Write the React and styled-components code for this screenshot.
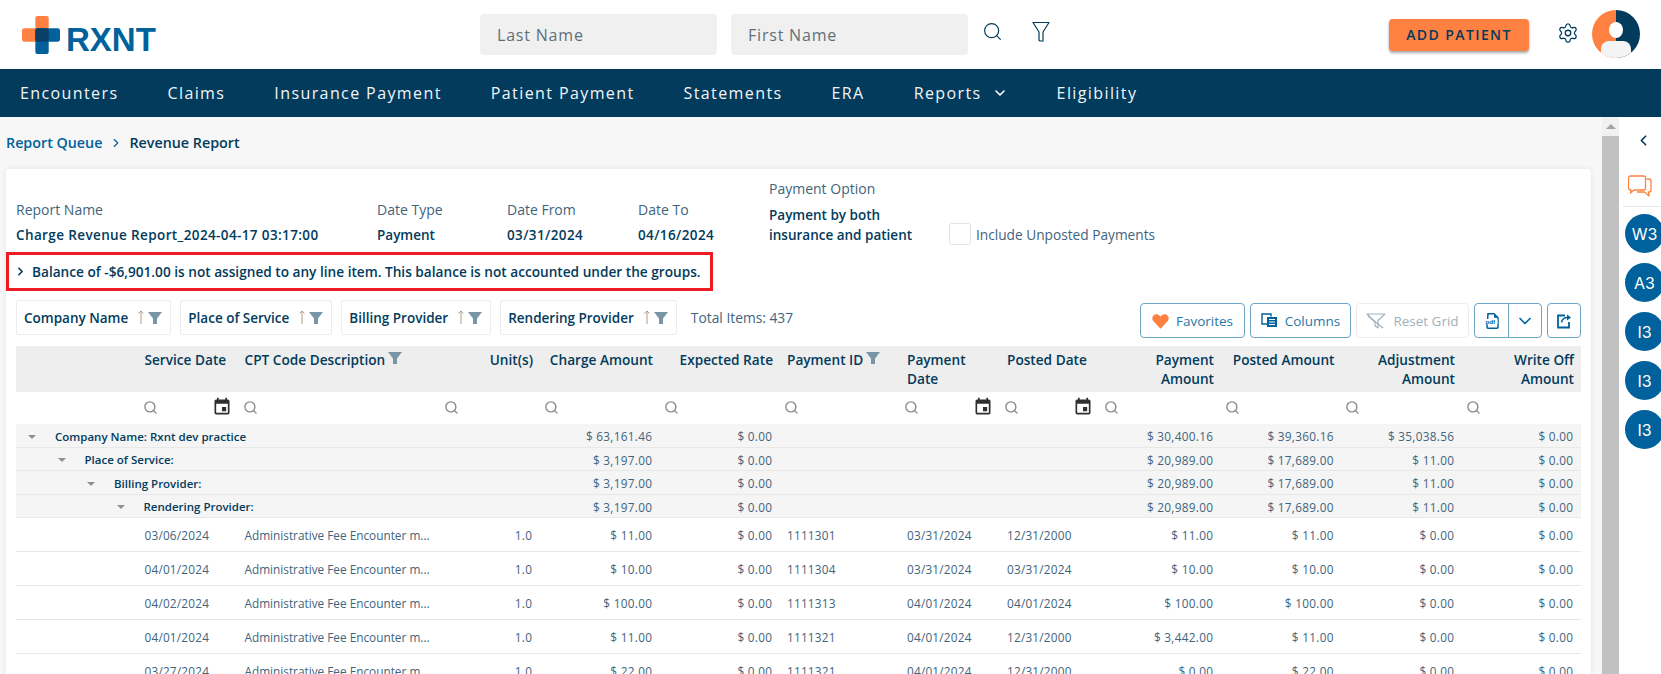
import React from 'react'
import styled, { createGlobalStyle } from 'styled-components'
import { Search, Settings, ChevronDown, ChevronRight, ChevronLeft } from 'lucide-react'
import { MdEvent } from 'react-icons/md'

const FONT = '"Open Sans", "Noto Sans", sans-serif'
const NAVY = '#023b5c'
const BLUE = '#00619c'
const ORANGE = '#ff8142'
const SLATE = '#3f647c'

const navItems = ['Encounters', 'Claims', 'Insurance Payment', 'Patient Payment', 'Statements', 'ERA', 'Reports', 'Eligibility']
const chips = ['Company Name', 'Place of Service', 'Billing Provider', 'Rendering Provider']
const avatars = ['W3', 'A3', 'I3', 'I3', 'I3']

const columns = [
  { title: '' },
  { title: 'Service Date', date: true },
  { title: 'CPT Code Description', funnel: true },
  { title: 'Unit(s)', right: true },
  { title: 'Charge Amount', right: true },
  { title: 'Expected Rate', right: true },
  { title: 'Payment ID', funnel: true, inset: true },
  { title: 'Payment Date', date: true, inset: true },
  { title: 'Posted Date', date: true, inset: true },
  { title: 'Payment Amount', right: true },
  { title: 'Posted Amount', right: true },
  { title: 'Adjustment Amount', right: true },
  { title: 'Write Off Amount', right: true },
]

const groups = [
  { label: 'Company Name: Rxnt dev practice', level: 0, charge: '$ 63,161.46', payment: '$ 30,400.16', posted: '$ 39,360.16', adjustment: '$ 35,038.56' },
  { label: 'Place of Service:', level: 1, charge: '$ 3,197.00', payment: '$ 20,989.00', posted: '$ 17,689.00', adjustment: '$ 11.00' },
  { label: 'Billing Provider:', level: 2, charge: '$ 3,197.00', payment: '$ 20,989.00', posted: '$ 17,689.00', adjustment: '$ 11.00' },
  { label: 'Rendering Provider:', level: 3, charge: '$ 3,197.00', payment: '$ 20,989.00', posted: '$ 17,689.00', adjustment: '$ 11.00' },
]

const rows = [
  ['03/06/2024', '$ 11.00', '1111301', '03/31/2024', '12/31/2000', '$ 11.00', '$ 11.00'],
  ['04/01/2024', '$ 10.00', '1111304', '03/31/2024', '03/31/2024', '$ 10.00', '$ 10.00'],
  ['04/02/2024', '$ 100.00', '1111313', '04/01/2024', '04/01/2024', '$ 100.00', '$ 100.00'],
  ['04/01/2024', '$ 11.00', '1111321', '04/01/2024', '12/31/2000', '$ 3,442.00', '$ 11.00'],
  ['03/27/2024', '$ 22.00', '1111321', '04/01/2024', '12/31/2000', '$ 0.00', '$ 22.00'],
]

const Funnel = ({ size = 15 }) => (
  <svg width={size} height={size} viewBox="0 0 16 16">
    <path d="M1 2h14L10 8.500V14H6V8.500z" fill="#7896a8" />
  </svg>
)

const Logo = () => (
  <svg width="38" height="38" viewBox="0 0 37 37">
    <rect x="13" y="0" width="13" height="26" rx="2" fill={ORANGE} />
    <rect x="0" y="12" width="26" height="13" rx="2" fill={ORANGE} />
    <rect x="13" y="12" width="24" height="13" rx="2" fill={BLUE} />
    <rect x="13" y="12" width="13" height="25" rx="2" fill={BLUE} />
    <rect x="13" y="12" width="13" height="13" rx="3" fill="#0b3f66" />
  </svg>
)

const Avatar = () => (
  <svg width="48" height="48" viewBox="0 0 48 48">
    <defs>
      <clipPath id="avatar-clip"><circle cx="24" cy="24" r="24" /></clipPath>
    </defs>
    <g clipPath="url(#avatar-clip)">
      <rect width="24" height="48" fill={ORANGE} />
      <rect x="24" width="24" height="48" fill={NAVY} />
      <ellipse cx="24" cy="20" rx="7" ry="8" fill="#fff" />
      <rect x="9" y="31" width="30" height="20" rx="8" fill="#f4f4f4" />
    </g>
  </svg>
)

const FunnelOutline = () => (
  <svg width="18" height="22" viewBox="0 0 18 22" fill="none" stroke={NAVY} strokeWidth="1.2">
    <path d="M1 1.500h16L11 11v9H8l-1-1v-8z" strokeLinejoin="round" />
  </svg>
)

const ChatIcon = () => (
  <svg width="24" height="23" viewBox="0 0 24 23" fill="none" stroke={ORANGE} strokeWidth="1.3" strokeLinejoin="round">
    <path d="M2.500 1h13a2 2 0 0 1 2 2v10a2 2 0 0 1-2 2H6l-3.500 3 .5-3h-.5a2 2 0 0 1-2-2V3a2 2 0 0 1 2-2z" />
    <path d="M18.500 4H21a2 2 0 0 1 2 2v9a2 2 0 0 1-2 2h-.5l.5 4-4.500-4H9" />
  </svg>
)

const Heart = () => (
  <svg width="17" height="16" viewBox="0 0 24 22">
    <path d="M12 22 2 11.500C-3 5 5-3 12 4.500 19-3 27 5 22 11.500z" fill={ORANGE} />
  </svg>
)

const ColumnsIcon = () => (
  <svg width="17" height="15" viewBox="0 0 17 15" fill="none" stroke={BLUE} strokeWidth="1.4">
    <path d="M10 3.500V1H1v10h5" />
    <rect x="6" y="4" width="10" height="10" fill={BLUE} stroke="none" />
    <path d="M8 6.500h6M8 9h6M8 11.500h6" stroke="#fff" strokeWidth="1" />
  </svg>
)

const ResetIcon = () => (
  <svg width="20" height="16" viewBox="0 0 20 16" fill="none" stroke="#9fb1bc" strokeWidth="1.2">
    <path d="M1 1h18l-7 6.500V15l-3-2V9z" strokeLinejoin="round" />
    <path d="M2 3l15 12" />
  </svg>
)

const PdfIcon = () => (
  <svg width="14" height="16" viewBox="0 0 14 16">
    <path d="M3 .8h6l4 4v9.400a1 1 0 0 1-1 1H3a1 1 0 0 1-1-1z" fill="none" stroke={BLUE} strokeWidth="1.500" />
    <path d="M9 .8v4h4z" fill={BLUE} />
    <rect x="0" y="6" width="12.500" height="5.500" fill="#fff" />
    <text x="0.500" y="11" fontSize="6.200" fontWeight="700" fill={BLUE} fontFamily="Liberation Sans, sans-serif">pdf</text>
  </svg>
)

const ExportIcon = () => (
  <svg width="16" height="16" viewBox="0 0 16 16" fill="none" stroke={BLUE} strokeWidth="1.800">
    <path d="M9 2.500H2v12h11V9" />
    <path d="M5.500 9.500C6 6.500 8.500 4.500 12 4.500" strokeWidth="1.500" />
    <path d="M11 1.500l4 3-4 3z" fill={BLUE} stroke="none" />
  </svg>
)

const SortArrow = () => (
  <svg width="8" height="15" viewBox="0 0 8 15" fill="none" stroke="#b39a86" strokeWidth="1">
    <path d="M4 14V1M1.500 3.500 4 1l2.500 2.500" />
  </svg>
)

export default function App() {
  return (
    <Page>
      <GlobalStyle />
      <Header>
        <LogoLink>
          <Logo />
          <LogoText>RXNT</LogoText>
        </LogoLink>
        <SearchForm>
          <NameInput placeholder="Last Name" />
          <NameInput placeholder="First Name" />
          <HeaderIcon $left={0}><Search size={21} color={NAVY} strokeWidth={1.3} /></HeaderIcon>
          <HeaderIcon $left={15}><FunnelOutline /></HeaderIcon>
        </SearchForm>
        <HeaderRight>
          <AddButton>ADD PATIENT</AddButton>
          <GearSlot><Settings size={22} color={NAVY} strokeWidth={1.4} /></GearSlot>
          <AvatarSlot><Avatar /></AvatarSlot>
        </HeaderRight>
      </Header>

      <Nav>
        {navItems.map(item => (
          <NavItem key={item}>
            {item}
            {item === 'Reports' && <ChevronDown size={16} color="#fff" strokeWidth={2.4} />}
          </NavItem>
        ))}
      </Nav>

      <Body>
        <Main>
          <Breadcrumb>
            <Crumb>Report Queue</Crumb>
            <ChevronRight size={14} color={BLUE} strokeWidth={2} />
            <CrumbCurrent>Revenue Report</CrumbCurrent>
          </Breadcrumb>

          <Card>
            <InfoGrid>
              <InfoItem><InfoLabel>Report Name</InfoLabel><InfoValue $digits>Charge Revenue Report_2024-04-17 03:17:00</InfoValue></InfoItem>
              <InfoItem><InfoLabel>Date Type</InfoLabel><InfoValue>Payment</InfoValue></InfoItem>
              <InfoItem><InfoLabel>Date From</InfoLabel><InfoValue $digits>03/31/2024</InfoValue></InfoItem>
              <InfoItem><InfoLabel>Date To</InfoLabel><InfoValue $digits>04/16/2024</InfoValue></InfoItem>
              <InfoItem>
                <InfoLabel $mb={6}>Payment Option</InfoLabel>
                <InfoValue>Payment by both<br />insurance and patient</InfoValue>
              </InfoItem>
              <CheckWrap>
                <Check />
                <CheckText>Include Unposted Payments</CheckText>
              </CheckWrap>
            </InfoGrid>

            <Alert>
              <ChevronRight size={13} color={NAVY} strokeWidth={3} />
              Balance of -$6,901.00 is not assigned to any line item. This balance is not accounted under the groups.
            </Alert>

            <Toolbar>
              {chips.map(chip => (
                <Chip key={chip}>
                  {chip}
                  <ChipIcons><SortArrow /><Funnel size={16} /></ChipIcons>
                </Chip>
              ))}
              <TotalItems>Total Items: 437</TotalItems>
              <ToolButtons>
                <ToolButton $width={105}><Heart />Favorites</ToolButton>
                <ToolButton $width={101}><ColumnsIcon />Columns</ToolButton>
                <ToolButton $width={113} $disabled><ResetIcon />Reset Grid</ToolButton>
                <SplitButton>
                  <SplitPart><PdfIcon /></SplitPart>
                  <SplitPart $divider><ChevronDown size={20} color={BLUE} strokeWidth={2} /></SplitPart>
                </SplitButton>
                <IconButton><ExportIcon /></IconButton>
              </ToolButtons>
            </Toolbar>

            <Table>
              <HeadRow>
                {columns.map((col, i) => (
                  <HeadCell key={i} $right={col.right} $inset={col.inset}>
                    {col.title}
                    {col.funnel && <FunnelSlot><Funnel size={16} /></FunnelSlot>}
                  </HeadCell>
                ))}
              </HeadRow>
              <FilterRow>
                {columns.map((col, i) => (
                  <FilterCell key={i}>
                    {i > 0 && <Search size={15} color="#8d8a86" strokeWidth={2.2} />}
                    {col.date && <MdEvent size={20} color="#2f2f2f" />}
                  </FilterCell>
                ))}
              </FilterRow>
              {groups.map(g => (
                <GroupRow key={g.label}>
                  <GroupLabel $level={g.level}><Caret />{g.label}</GroupLabel>
                  <Cell $right>{g.charge}</Cell>
                  <Cell $right>$ 0.00</Cell>
                  <Cell />
                  <Cell />
                  <Cell />
                  <Cell $right>{g.payment}</Cell>
                  <Cell $right>{g.posted}</Cell>
                  <Cell $right>{g.adjustment}</Cell>
                  <Cell $right>$ 0.00</Cell>
                </GroupRow>
              ))}
              {rows.map((r, i) => (
                <DataRow key={i}>
                  <Cell />
                  <Cell $num>{r[0]}</Cell>
                  <Cell>Administrative Fee Encounter m...</Cell>
                  <Cell $right>1.0</Cell>
                  <Cell $right>{r[1]}</Cell>
                  <Cell $right>$ 0.00</Cell>
                  <Cell $num $inset>{r[2]}</Cell>
                  <Cell $num $inset>{r[3]}</Cell>
                  <Cell $num $inset>{r[4]}</Cell>
                  <Cell $right>{r[5]}</Cell>
                  <Cell $right>{r[6]}</Cell>
                  <Cell $right>$ 0.00</Cell>
                  <Cell $right>$ 0.00</Cell>
                </DataRow>
              ))}
            </Table>
          </Card>
        </Main>

        <ScrollBar>
          <ScrollUp />
          <ScrollThumb />
        </ScrollBar>

        <Sidebar>
          <SideToggle><ChevronLeft size={17} color={NAVY} strokeWidth={2.4} /></SideToggle>
          <SideChat><ChatIcon /></SideChat>
          <AvatarList>
            {avatars.map((a, i) => <Bubble key={i}>{a}</Bubble>)}
          </AvatarList>
        </Sidebar>
      </Body>
    </Page>
  )
}

const GlobalStyle = createGlobalStyle`
  html, body {
    margin: 0;
    padding: 0;
    height: 100%;
    overflow: hidden;
    background: #fff;
  }
  * {
    box-sizing: border-box;
  }
`
const Page = styled.div`
  height: 100vh;
  display: flex;
  flex-direction: column;
  overflow: hidden;
  font-family: ${FONT};
  color: ${NAVY};
`
const Header = styled.header`
  height: 69px;
  flex: none;
  display: flex;
  align-items: center;
  padding: 0 21px;
  background: #fff;
`
const LogoLink = styled.div`
  width: 459px;
  display: flex;
  align-items: center;
  gap: 6px;
  padding-left: 1px;
`
const LogoText = styled.span`
  font-family: "Liberation Sans", Arial, sans-serif;
  font-weight: 700;
  font-size: 33px;
  line-height: 37px;
  margin-top: 10px;
  color: ${BLUE};
`
const SearchForm = styled.div`
  display: flex;
  align-items: center;
  gap: 14px;
`
const NameInput = styled.input`
  width: 237px;
  height: 41px;
  border: none;
  border-radius: 4px;
  background: #f0f0f0;
  padding: 0 17px;
  font-family: ${FONT};
  font-size: 16px;
  letter-spacing: 0.8px;
  &::placeholder {
    color: #5f6f7a;
    opacity: 1;
  }
`
const HeaderIcon = styled.span`
  display: flex;
  margin-left: ${p => p.$left}px;
  margin-top: -6px;
`
const HeaderRight = styled.div`
  margin-left: auto;
  display: flex;
  align-items: center;
`
const GearSlot = styled.span`
  display: flex;
  margin: -3px 13px 0 28px;
`
const AvatarSlot = styled.span`
  display: flex;
  margin-top: -2px;
`
const AddButton = styled.button`
  width: 140px;
  height: 32px;
  border: none;
  border-radius: 4px;
  background: ${ORANGE};
  box-shadow: 0 2px 3px rgba(0, 0, 0, 0.35);
  color: ${NAVY};
  font-family: ${FONT};
  font-weight: 600;
  font-size: 14px;
  letter-spacing: 1.400px;
`
const Nav = styled.nav`
  height: 48px;
  flex: none;
  display: flex;
  align-items: center;
  gap: 49px;
  padding: 0 20px;
  background: ${NAVY};
`
const NavItem = styled.span`
  display: flex;
  align-items: center;
  gap: 10px;
  color: #f2f5f7;
  font-size: 16px;
  letter-spacing: 1.400px;
  white-space: nowrap;
`
const Body = styled.div`
  flex: 1;
  min-height: 0;
  display: flex;
`
const Main = styled.main`
  flex: 1;
  min-width: 0;
  background: #f7f7f7;
  padding: 0 11px 0 6px;
  overflow: hidden;
`
const Breadcrumb = styled.div`
  height: 51px;
  margin-bottom: 1px;
  display: flex;
  align-items: center;
  gap: 6.500px;
  font-size: 14.300px;
  font-weight: 600;
`
const Crumb = styled.span`
  color: ${BLUE};
`
const CrumbCurrent = styled.span`
  color: ${NAVY};
`
const Card = styled.section`
  background: #fff;
  border-radius: 4px;
  box-shadow: 0 0 6px rgba(0, 0, 0, 0.08);
  padding: 10px 10px 0;
  height: 600px;
`
const InfoGrid = styled.div`
  display: grid;
  grid-template-columns: 361px 130px 131px 131px 180px 1fr;
  align-items: end;
  height: 61.500px;
`
const InfoItem = styled.div`
  display: flex;
  flex-direction: column;
`
const InfoLabel = styled.span`
  font-size: 14px;
  line-height: 20px;
  margin-bottom: ${p => p.$mb || 5}px;
  color: ${SLATE};
`
const InfoValue = styled.span`
  font-size: 13.500px;
  line-height: 20px;
  font-weight: 600;
  letter-spacing: ${p => (p.$digits ? '0.38px' : '0')};
  white-space: nowrap;
`
const CheckWrap = styled.label`
  display: flex;
  align-items: center;
  gap: 5px;
`
const Check = styled.span`
  width: 22px;
  height: 22px;
  border: 1px solid #e4e4e4;
  border-radius: 3px;
`
const CheckText = styled.span`
  font-size: 13.700px;
  color: ${SLATE};
`
const Alert = styled.div`
  width: 707px;
  height: 39px;
  margin: 11.500px 0 9px -10px;
  display: flex;
  align-items: center;
  gap: 5px;
  padding-left: 5px;
  border: 3px solid #ed1c24;
  font-size: 13.650px;
  font-weight: 600;
  white-space: nowrap;
`
const Toolbar = styled.div`
  display: flex;
  align-items: flex-start;
  gap: 9px;
  height: 46px;
`
const Chip = styled.div`
  height: 35px;
  display: flex;
  align-items: center;
  gap: 9px;
  padding: 0 7px;
  border: 1px solid #ececec;
  border-radius: 2px;
  font-size: 13.500px;
  font-weight: 600;
  white-space: nowrap;
`
const ChipIcons = styled.span`
  display: flex;
  align-items: center;
  gap: 2px;
`
const TotalItems = styled.span`
  margin-left: 5px;
  line-height: 36px;
  font-size: 13.800px;
  color: ${SLATE};
`
const ToolButtons = styled.div`
  margin-left: auto;
  margin-top: 3px;
  display: flex;
  gap: 5px;
`
const ToolButton = styled.button`
  width: ${p => p.$width}px;
  height: 35px;
  display: flex;
  align-items: center;
  justify-content: center;
  gap: 7px;
  padding: 0;
  background: #fff;
  border: 1px solid ${p => (p.$disabled ? '#ececec' : '#6ea6c8')};
  border-radius: 4px;
  color: ${p => (p.$disabled ? '#9fb1bc' : '#2a76a6')};
  font-family: ${FONT};
  font-size: 13.500px;
`
const SplitButton = styled.div`
  height: 35px;
  display: flex;
  border: 1px solid #6ea6c8;
  border-radius: 4px;
`
const SplitPart = styled.span`
  width: 33px;
  display: flex;
  align-items: center;
  justify-content: center;
  border-left: ${p => (p.$divider ? '1px solid #6ea6c8' : 'none')};
`
const IconButton = styled.button`
  width: 34px;
  height: 35px;
  padding: 0;
  display: flex;
  align-items: center;
  justify-content: center;
  background: #fff;
  border: 1px solid #6ea6c8;
  border-radius: 4px;
`
const Table = styled.div`
  font-size: 12px;
`
const gridColumns = `
  display: grid;
  grid-template-columns: 123px 100px 200.5px 100px 120px 120px 120px 100px 100.5px 120.5px 120.5px 120.5px 119px;
`
const HeadRow = styled.div`
  ${gridColumns}
  height: 46px;
  background: #eeeeee;
`
const HeadCell = styled.div`
  padding: 3.500px ${p => (p.$right ? '6.500px' : '0')} 0 ${p => (p.$inset ? '7.500px' : p.$right ? '0' : '5.500px')};
  font-size: 13.650px;
  line-height: 19px;
  font-weight: 600;
  text-align: ${p => (p.$right ? 'right' : 'left')};
`
const FunnelSlot = styled.span`
  margin-left: 2px;
  vertical-align: -1px;
`
const FilterRow = styled.div`
  ${gridColumns}
  height: 32px;
  padding-bottom: 2px;
  background: #fff;
`
const FilterCell = styled.div`
  display: flex;
  align-items: center;
  justify-content: space-between;
  padding: 0 7px 0 4px;
`
const GroupRow = styled.div`
  ${gridColumns}
  height: 23.500px;
  padding-top: 2px;
  align-items: center;
  background: #f5f5f5;
  border-bottom: 1px solid #e8e8e8;
  color: ${SLATE};
`
const GroupLabel = styled.div`
  grid-column: span 4;
  display: flex;
  align-items: center;
  gap: 19px;
  padding-left: ${p => 12 + p.$level * 29.500}px;
  color: ${NAVY};
  font-size: 11.500px;
  font-weight: 600;
  white-space: nowrap;
`
const Caret = styled.span`
  width: 0;
  height: 0;
  border-left: 4px solid transparent;
  border-right: 4px solid transparent;
  border-top: 4px solid #8a9299;
  margin-top: 1px;
`
const DataRow = styled.div`
  ${gridColumns}
  height: 34px;
  align-items: center;
  background: #fff;
  border-bottom: 1px solid #e8e8e8;
  color: ${SLATE};
`
const Cell = styled.div`
  padding: ${p => (p.$right ? '0 7.300px 0 0' : p.$inset ? '0 0 0 7.500px' : '0 0 0 5.500px')};
  font-size: 11.800px;
  letter-spacing: ${p => (p.$right ? '0.28px' : p.$num ? '0.2px' : '0')};
  text-align: ${p => (p.$right ? 'right' : 'left')};
  white-space: nowrap;
  overflow: hidden;
`
const ScrollBar = styled.div`
  width: 17px;
  flex: none;
  display: flex;
  flex-direction: column;
  background: #f1f1f1;
`
const ScrollUp = styled.div`
  height: 19px;
  flex: none;
  display: flex;
  align-items: center;
  justify-content: center;
  &::before {
    content: '';
    border-left: 5px solid transparent;
    border-right: 5px solid transparent;
    border-bottom: 5px solid #a3a3a3;
  }
`
const ScrollThumb = styled.div`
  flex: 1;
  background: #c1c1c1;
`
const Sidebar = styled.aside`
  width: 42px;
  flex: none;
  overflow: hidden;
  background: #fff;
  padding-left: 4px;
`
const SideToggle = styled.div`
  height: 46px;
  padding-left: 3px;
  display: flex;
  align-items: center;
  justify-content: center;
`
const SideChat = styled.div`
  height: 44px;
  padding: 12px 0 0 5px;
  border-bottom: 1px solid #e8e8e8;
`
const AvatarList = styled.div`
  width: 39px;
  margin: 7px 0 0 2px;
  display: flex;
  flex-direction: column;
  gap: 10px;
`
const Bubble = styled.div`
  width: 39px;
  height: 39px;
  flex: none;
  border-radius: 50%;
  background: ${BLUE};
  color: #fff;
  display: flex;
  align-items: center;
  justify-content: center;
  font-family: Inter, sans-serif;
  font-size: 16px;
`
